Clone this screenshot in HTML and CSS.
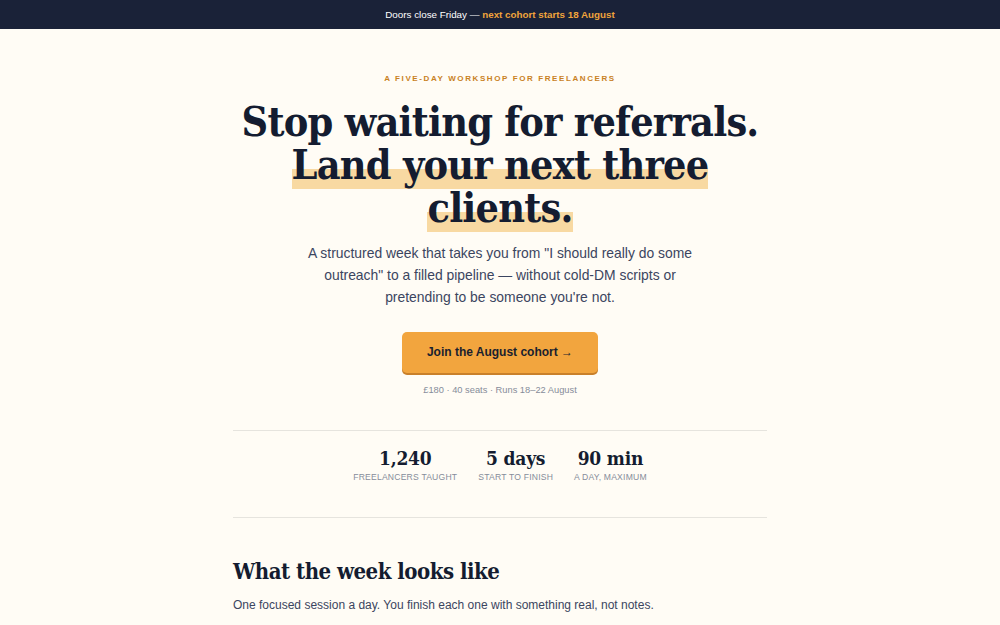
FILE: index.html
```html
<!DOCTYPE html>
<html lang="en">
<head>
<meta charset="utf-8">
<title>Workshop</title>
<link rel="stylesheet" href="styles.css">
</head>
<body>
<div class="topbar">Doors close Friday — <strong>next cohort starts 18 August</strong></div>
<main class="page">
  <section class="hero">
    <p class="eyebrow">A five-day workshop for freelancers</p>
    <h1 class="title">Stop waiting for referrals.<br><span class="hl">Land your next three clients.</span></h1>
    <p class="lede">A structured week that takes you from "I should really do some outreach" to a filled pipeline — without cold-DM scripts or pretending to be someone you're not.</p>
    <a class="cta" href="#">Join the August cohort →</a>
    <p class="meta">£180 · 40 seats · Runs 18–22 August</p>
  </section>
  <section class="stats">
    <div class="stat"><div class="num">1,240</div><div class="label">Freelancers taught</div></div>
    <div class="stat"><div class="num">5 days</div><div class="label">Start to finish</div></div>
    <div class="stat"><div class="num">90 min</div><div class="label">A day, maximum</div></div>
  </section>
  <section class="week">
    <h2 class="h2">What the week looks like</h2>
    <p class="sub">One focused session a day. You finish each one with something real, not notes.</p>
  </section>
</main>
</body>
</html>
```
FILE: styles.css
```css
* { box-sizing: border-box; }
html, body { margin: 0; padding: 0; }
body {
  background: #fffcf5;
  font-family: "Liberation Sans", Arial, sans-serif;
  color: #1a2035;
}
.topbar {
  background: #1a2238;
  color: #ffffff;
  text-align: center;
  font-size: 9.8px;
  line-height: 29px;
  height: 29px;
}
.topbar strong { color: #f0a43c; font-weight: 700; }
.page {
  width: 534px;
  margin: 0 auto;
}
.hero {
  text-align: center;
  padding-top: 44px;
}
.eyebrow {
  margin: 0;
  font-size: 8px;
  font-weight: 700;
  letter-spacing: 1.6px;
  text-transform: uppercase;
  color: #c9811f;
  line-height: 12px;
}
.title {
  margin: 16px auto 0;
  width: 530px;
  font-family: "DejaVu Serif Condensed", "DejaVu Serif", Georgia, serif;
  font-weight: 700;
  font-size: 41px;
  line-height: 43px;
  letter-spacing: -0.8px;
  color: #141c30;
}
.hl {
  background: linear-gradient(to bottom, transparent 58%, #f8d9a2 58%, #f8d9a2 100%);
  -webkit-box-decoration-break: clone;
  box-decoration-break: clone;
}
.lede {
  margin: 12px auto 0;
  width: 400px;
  font-size: 13.9px;
  line-height: 22px;
  color: #3b4560;
}
.cta {
  display: inline-block;
  margin-top: 24px;
  width: 196px;
  height: 41px;
  line-height: 41px;
  background: #f2a53e;
  color: #1a1f2e;
  text-decoration: none;
  font-weight: 700;
  font-size: 12px;
  border-radius: 5px;
  box-shadow: 0 2px 0 #c9802a;
}
.meta {
  margin: 10px 0 0;
  font-size: 9.3px;
  color: #868c9a;
  line-height: 14px;
}
.stats {
  margin-top: 33px;
  border-top: 1px solid #e6e4de;
  border-bottom: 1px solid #e6e4de;
  padding: 14px 0 34px;
  display: flex;
  justify-content: center;
  gap: 21px;
}
.stat { text-align: center; }
.num {
  font-family: "DejaVu Serif Condensed", "DejaVu Serif", Georgia, serif;
  font-weight: 700;
  font-size: 19px;
  line-height: 26px;
  color: #141c30;
  letter-spacing: -0.2px;
}
.label {
  font-size: 8.6px;
  text-transform: uppercase;
  color: #868c9a;
  letter-spacing: 0.2px;
  line-height: 12px;
}
.week { padding-top: 38px; }
.h2 {
  margin: 0;
  font-family: "DejaVu Serif Condensed", "DejaVu Serif", Georgia, serif;
  font-weight: 700;
  font-size: 22px;
  line-height: 30px;
  letter-spacing: -0.5px;
  color: #141c30;
}
.sub {
  margin: 10px 0 0;
  font-size: 12px;
  line-height: 18px;
  color: #3b4560;
}
```
